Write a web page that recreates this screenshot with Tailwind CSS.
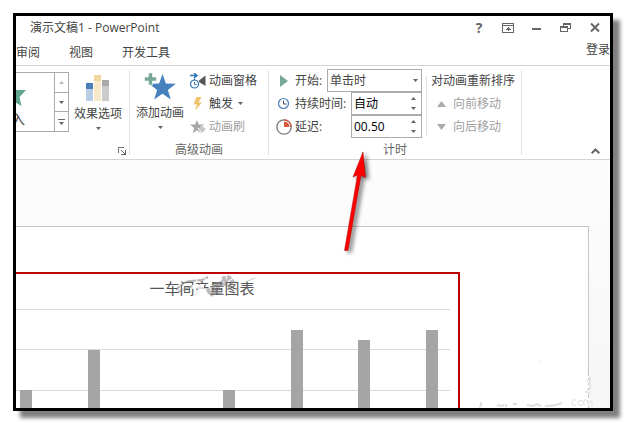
<!DOCTYPE html>
<html lang="zh-CN">
<head>
<meta charset="utf-8">
<meta name="viewport" content="width=device-width, initial-scale=1">
<title>演示文稿1 - PowerPoint</title>
<script src="https://cdn.jsdelivr.net/npm/@tailwindcss/browser@4"></script>
</head>
<body class="bg-white">
<div class="flex min-h-screen p-[13px] font-['Open_Sans','Noto_Sans_CJK_SC',sans-serif] text-[12px] leading-4 text-[#444]">
<div class="relative flex min-w-0 flex-1 flex-col border-3 border-black bg-white shadow-[7px_7px_4px_#808080]">

  <header class="flex h-6 shrink-0 items-center pl-[14px] pr-2">
    <h1 class="flex-1 whitespace-nowrap">演示文稿1 - PowerPoint</h1>
    <div class="flex items-center gap-[15px] text-[#666]">
      <button aria-label="帮助" class="flex size-[14px] items-center justify-center text-[14px] font-bold">?</button>
      <button aria-label="功能区显示选项" class="size-[14px]"><svg class="size-[14px]" viewBox="0 0 14 14" fill="none" stroke="currentColor" shape-rendering="crispEdges"><path d="M1 2.500h12M1 4.500h12M1.500 2v9M12.500 2v9M1 11.500h12M7.500 6v4M6 7.500h3M5 8.500h5"/></svg></button>
      <button aria-label="最小化" class="size-[14px]"><svg class="size-[14px]" viewBox="0 0 14 14"><path d="M2 7h9v2H2z" fill="currentColor"/></svg></button>
      <button aria-label="还原" class="size-[14px]"><svg class="size-[14px]" viewBox="0 0 14 14" fill="none" stroke="currentColor" shape-rendering="crispEdges"><path d="M4.500 5V2.500h7v5H9M4 3.500h8M1.500 5.500h7v5h-7zM1 6.500h8"/></svg></button>
      <button aria-label="关闭" class="size-[14px]"><svg class="size-[14px]" viewBox="0 0 14 14"><path d="M3 2.500l8 8M11 2.500l-8 8" stroke="currentColor" stroke-width="2"/></svg></button>
    </div>
  </header>

  <nav class="flex h-[26px] shrink-0 items-center overflow-hidden border-b border-[#d4d4d4] whitespace-nowrap">
    <a href="#review" class="w-[53px]">审阅</a>
    <a href="#view" class="w-[53px]">视图</a>
    <a href="#developer" class="flex-1">开发工具</a>
    <a href="#login" class="w-6 self-start pt-[2px]">登录</a>
  </nav>

  <div class="flex h-[94px] shrink-0 border-b border-[#d4d4d4] whitespace-nowrap">
    <section aria-label="动画" class="relative flex w-[113px] shrink-0 items-start gap-[5px] pt-[6px]">
      <div class="flex h-[60px] w-[53px] border-y border-[#ababab]">
        <button class="flex flex-1 flex-col items-start justify-between overflow-hidden pt-[16px]">
          <svg class="h-[18px] w-[11px]" viewBox="0 0 11 18"><path d="M-5 2L0 1l10 0L3.500 8l2 9L-5 11z" fill="#5fa58f"/></svg>
          <span class="-ml-[5px] text-[14px] leading-[24px]">入</span>
        </button>
        <div class="flex w-[15px] flex-col border-x border-[#ababab]">
          <button aria-label="上一行" class="flex flex-1 items-center justify-center border-b border-[#ababab]"><svg class="h-[3px] w-[5px]" viewBox="0 0 5 3"><path d="M0 3L2.500 0 5 3z" fill="#bbb"/></svg></button>
          <button aria-label="下一行" class="flex flex-1 items-center justify-center border-b border-[#ababab]"><svg class="h-[3px] w-[5px]" viewBox="0 0 5 3"><path d="M0 0h5L2.500 3z" fill="#666"/></svg></button>
          <button aria-label="其他" class="flex flex-1 items-center justify-center"><svg class="h-[6px] w-[7px]" viewBox="0 0 7 6"><path d="M0 0h7v1H0zM1 3h5L3.500 6z" fill="#666"/></svg></button>
        </div>
      </div>
      <button class="flex flex-col items-center pt-[3px]">
        <svg class="h-[27px] w-6" viewBox="0 0 24 27" shape-rendering="crispEdges"><path d="M0 8h7v6H0z" fill="#4a7ebb"/><path d="M0 14h7v12H0z" fill="#b9cde5"/><path d="M8 0h7v6H8z" fill="#f2d79c"/><path d="M8 6h7v20H8z" fill="#f8e9c8"/><path d="M16 5h7v6h-7z" fill="#a8a8a8"/><path d="M16 11h7v15h-7z" fill="#cbcbcb"/></svg>
        <span class="mt-1">效果选项</span>
        <svg class="mt-[5px] h-[3px] w-[5px]" viewBox="0 0 5 3"><path d="M0 0h5L2.500 3z" fill="#666"/></svg>
      </button>
      <button aria-label="显示其他效果选项" class="absolute right-[3px] bottom-1 size-[8px]"><svg class="size-[8px]" viewBox="0 0 8 8" fill="none" stroke="#777" shape-rendering="crispEdges"><path d="M.5 6V1M0 .5h6"/><path d="M3 3l3 3M7.500 3v5M3 7.500h5M6 6.500h1" stroke="#666"/></svg></button>
    </section>
    <div class="my-1 w-px shrink-0 bg-[#e1e1e1]"></div>

    <section aria-labelledby="g-adv" class="flex w-[138px] shrink-0 flex-col">
      <div class="flex flex-1 gap-[6px] pt-[3px] pl-[6px]">
        <button class="flex flex-col items-center self-start pt-[3px]">
          <svg class="h-[29px] w-[32px]" viewBox="0 0 32 29"><path d="M18.500 2l3.400 9.500 10 .2-8 6.200 2.900 9.600-8.300-5.800-8.300 5.800 2.900-9.600-8-6.200 10-.2z" fill="#4680bd"/><path d="M4.500 1h4v4h4v4h-4v4h-4V9h-4V5h4z" fill="#76a797" stroke="#fff" stroke-width=".6"/></svg>
          <span class="mt-1">添加动画</span>
          <svg class="mt-[5px] h-[3px] w-[5px]" viewBox="0 0 5 3"><path d="M0 0h5L2.500 3z" fill="#666"/></svg>
        </button>
        <div class="flex flex-col">
          <button class="flex h-[23px] items-center gap-[3px]">
            <svg class="size-4" viewBox="0 0 16 16" fill="none"><path d="M0 2.500h6M4 .2l3 2.300-3 2.300" stroke="#2e75b6" stroke-width="1.500"/><circle cx="4.500" cy="11" r="4" stroke="#2e75b6" stroke-width="1.200"/><path d="M4.500 9v2.500h2M4.500 5.500v2" stroke="#2e75b6"/><path d="M9 7.500L15.500 2.500v10.500L9 9z" fill="#555"/></svg>
            <span>动画窗格</span>
          </button>
          <button class="flex h-[23px] items-center gap-[3px]">
            <svg class="size-4" viewBox="0 0 16 16"><path d="M6.500 1h5L8.500 6.500H12L5 15l2-6.500H3.500z" fill="#f0c36d"/></svg>
            <span>触发</span>
            <svg class="ml-[2px] h-[3px] w-[5px]" viewBox="0 0 5 3"><path d="M0 0h5L2.500 3z" fill="#666"/></svg>
          </button>
          <button disabled class="flex h-[23px] items-center gap-[3px] text-[#a0a0a0]">
            <svg class="size-4" viewBox="0 0 16 16"><path d="M7 1l1.700 4.500H14L10 9l1 5-4-2.800L3 14l1-5L0 5.500h5.200z" fill="#a6a6a6"/><path d="M8 9l4 5M11 7l4 3" stroke="#fff" stroke-width="1.200"/><path d="M9 9l3-2 4 3-4 4z" fill="#c6c6c6"/></svg>
            <span>动画刷</span>
          </button>
        </div>
      </div>
      <h2 id="g-adv" class="h-[17px] text-center text-[#666]">高级动画</h2>
    </section>
    <div class="my-1 w-px shrink-0 bg-[#e1e1e1]"></div>

    <section aria-labelledby="g-time" class="flex w-[252px] shrink-0 flex-col">
      <div class="flex flex-1 items-start gap-1 pt-[3px] pl-[7px]">
        <div class="w-[146px]">
          <div class="flex h-[23px] items-center gap-[3px]">
            <svg class="size-4" viewBox="0 0 16 16"><path d="M4 2l8 6-8 6z" fill="#76a797"/></svg>
            <label for="start" class="flex-1">开始:</label>
            <div class="relative w-[95px]">
              <select id="start" class="block h-[23px] w-full appearance-none border border-[#ababab] bg-white pl-[2px]"><option>单击时</option></select>
              <svg class="pointer-events-none absolute top-[10px] right-1 h-[3px] w-[5px]" viewBox="0 0 5 3"><path d="M0 0h5L2.500 3z" fill="#666"/></svg>
            </div>
          </div>
          <div class="flex h-[23px] items-center gap-[3px]">
            <svg class="size-4" viewBox="0 0 16 16" fill="none"><circle cx="7.500" cy="7.500" r="5" stroke="#4a7ebb" stroke-width="1.200"/><path d="M7.500 4.500v3.500h3" stroke="#446"/></svg>
            <label for="duration" class="flex-1">持续时间:</label>
            <div class="flex h-[23px] w-[71px] border border-[#ababab]">
              <input id="duration" type="text" value="自动" class="w-0 flex-1 pl-[2px] text-black outline-none">
              <div class="flex w-[15px] flex-col">
                <button aria-label="增加持续时间" class="flex flex-1 items-center justify-center"><svg class="h-[3px] w-[5px]" viewBox="0 0 5 3"><path d="M0 3L2.500 0 5 3z" fill="#666"/></svg></button>
                <button aria-label="减少持续时间" class="flex flex-1 items-center justify-center"><svg class="h-[3px] w-[5px]" viewBox="0 0 5 3"><path d="M0 0h5L2.500 3z" fill="#666"/></svg></button>
              </div>
            </div>
          </div>
          <div class="flex h-[23px] items-center gap-[3px]">
            <svg class="size-4" viewBox="0 0 16 16"><circle cx="8" cy="8" r="7.200" fill="#fff" stroke="#777" stroke-width="1.300"/><path d="M8 8V2.500A5.500 5.500 0 0 1 13.500 8z" fill="#d9573d"/><path d="M8 .8A7.200 7.200 0 0 1 15.200 8" fill="none" stroke="#d9573d" stroke-width="1.300"/></svg>
            <label for="delay" class="flex-1">延迟:</label>
            <div class="flex h-[23px] w-[71px] border border-[#ababab]">
              <input id="delay" type="text" value="00.50" class="w-0 flex-1 pl-[2px] text-black outline-none">
              <div class="flex w-[15px] flex-col">
                <button aria-label="增加延迟" class="flex flex-1 items-center justify-center"><svg class="h-[3px] w-[5px]" viewBox="0 0 5 3"><path d="M0 3L2.500 0 5 3z" fill="#666"/></svg></button>
                <button aria-label="减少延迟" class="flex flex-1 items-center justify-center"><svg class="h-[3px] w-[5px]" viewBox="0 0 5 3"><path d="M0 0h5L2.500 3z" fill="#666"/></svg></button>
              </div>
            </div>
          </div>
        </div>
        <div class="my-[7px] w-px self-stretch bg-[#e1e1e1]"></div>
        <div class="flex flex-col">
          <div class="flex h-[23px] items-center">对动画重新排序</div>
          <button disabled class="flex h-[23px] items-center gap-[7px] pl-[6px] text-[#a0a0a0]"><svg class="h-[6px] w-[9px]" viewBox="0 0 9 6"><path d="M0 6l4.500-6L9 6z" fill="#aaa"/></svg>向前移动</button>
          <button disabled class="flex h-[23px] items-center gap-[7px] pl-[6px] text-[#a0a0a0]"><svg class="h-[6px] w-[9px]" viewBox="0 0 9 6"><path d="M0 0h9L4.500 6z" fill="#aaa"/></svg>向后移动</button>
        </div>
      </div>
      <h2 id="g-time" class="h-[17px] text-center text-[#666]">计时</h2>
    </section>
    <div class="my-1 w-px shrink-0 bg-[#e1e1e1]"></div>
    <div class="flex flex-1 items-end justify-end pr-[10px] pb-[5px]">
      <button aria-label="折叠功能区"><svg class="h-[6px] w-[9px]" viewBox="0 0 9 6"><path d="M.7 5.200L4.500 1.500l3.800 3.700" fill="none" stroke="#666" stroke-width="2"/></svg></button>
    </div>
  </div>

  <main class="flex flex-1 flex-col overflow-hidden bg-linear-to-b from-[#fdfdfd] to-[#f6f6f6] pt-[66px] pr-[21px]">
    <div class="flex flex-1 flex-col border-t border-r border-[#c6c6c6] bg-white pt-[45px] pr-[128px]">
      <figure class="flex flex-1 flex-col border-t-2 border-r-2 border-[#c00000]">
        <figcaption class="relative flex h-[35px] items-start justify-center pt-1 pr-[70px] text-[15px] leading-5 text-[#555]">
          <span>一车间产量图表</span>
          <svg class="absolute top-[1px] left-[158px] h-[24px] w-[86px]" viewBox="0 0 86 24" fill="none" aria-hidden="true"><path d="M16 10h14v3l-12 1zM24 16h12v6H24zM20 15h9v6h-9z" fill="#fff" opacity=".85"/><g stroke="#777"><path d="M2 15q7-8 14-9l12-1M4 17l14-6M9 8l9-2M26 6l8-4" stroke-width="2" stroke-dasharray="5 1" opacity=".55"/><path d="M33 17l20-12M36 20l8-7M48 4l7-1 5 6M50 8l7 3" stroke-width="5" stroke-dasharray="4 1" opacity=".5"/><path d="M74 6l7-3" opacity=".4"/></g></svg>
        </figcaption>
        <div class="grid flex-1">
          <div class="mr-2 flex flex-col [grid-area:1/1]">
            <div class="h-10 border-t border-[#d9d9d9]"></div>
            <div class="h-[41px] border-t border-[#d9d9d9]"></div>
            <div class="flex-1 border-t border-[#d9d9d9]"></div>
          </div>
          <div class="flex items-end justify-between pr-[20px] pl-1 [grid-area:1/1]">
            <div class="w-3 bg-[#a5a5a5]" style="height:18px"></div>
            <div class="w-3 bg-[#a5a5a5]" style="height:58px"></div>
            <div class="w-3 bg-[#a5a5a5]" style="height:0"></div>
            <div class="w-3 bg-[#a5a5a5]" style="height:18px"></div>
            <div class="w-3 bg-[#a5a5a5]" style="height:78px"></div>
            <div class="w-3 bg-[#a5a5a5]" style="height:68px"></div>
            <div class="w-3 bg-[#a5a5a5]" style="height:78px"></div>
          </div>
        </div>
      </figure>
    </div>
  </main>

  <svg class="pointer-events-none absolute top-[130px] left-[320px] h-[116px] w-[50px] drop-shadow-[3px_2px_2px_rgba(0,0,0,0.55)]" viewBox="0 0 50 116" aria-hidden="true"><path d="M27 6l2.500 25.500-4.500-2L12 104.500H8.500L21.500 29 17 31z" fill="#f00" stroke="#a00" stroke-width=".5"/></svg>
  <svg class="pointer-events-none absolute right-[15px] bottom-0 h-[56px] w-[118px]" viewBox="0 0 118 56" fill="none" aria-hidden="true"><path d="M111.500 23v18M111.500 46v8" stroke="#fff" stroke-width="2" stroke-dasharray="3 2"/><path d="M110 22l3 3v12l-3 1M109 29h3M108 40h5" stroke="#d4d4d4"/><path d="M61 10l3-1" stroke="#e8e8e8"/><path d="M4 50v4l-2 1M20 53l4 1 3-1M29 52v3M36 52h4M50 53l6 1 4-2 4 2M68 54q10 0 17-3" stroke="#dedede" stroke-width="2"/><path d="M99 48q-4-1-4 3t4 2M101 50q1-3 4-1t0 4-4-1zM107 54v-6q4-1 4 2v4M111 50q4-3 4 1v3" stroke="#dedede"/></svg>
</div>
</div>
</body>
</html>
